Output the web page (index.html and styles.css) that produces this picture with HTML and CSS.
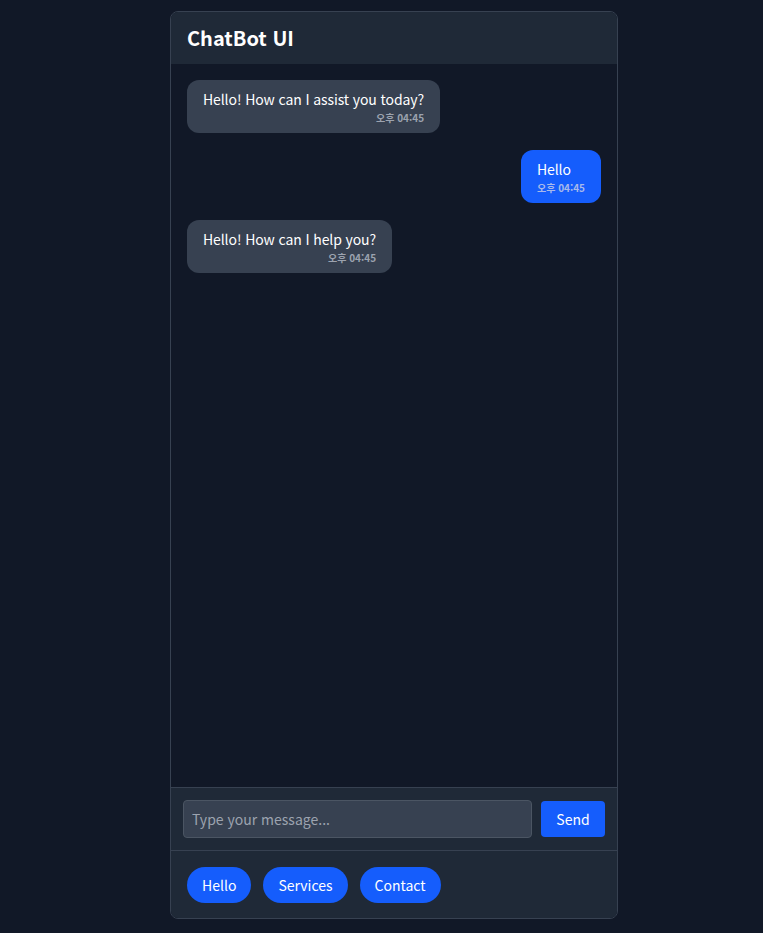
FILE: index.html
```html
<!DOCTYPE html>
<html lang="ko">
<head>
<meta charset="utf-8">
<title>ChatBot UI</title>
<link rel="stylesheet" href="styles.css">
</head>
<body>
<div class="chat">
  <header class="chat-header"><h1>ChatBot UI</h1></header>
  <main class="messages">
    <div class="msg bot">
      <div class="text">Hello! How can I assist you today?</div>
      <div class="time">오후 04:45</div>
    </div>
    <div class="msg user">
      <div class="text">Hello</div>
      <div class="time">오후 04:45</div>
    </div>
    <div class="msg bot">
      <div class="text">Hello! How can I help you?</div>
      <div class="time">오후 04:45</div>
    </div>
  </main>
  <form class="composer">
    <input class="input" type="text" placeholder="Type your message...">
    <button class="send" type="button">Send</button>
  </form>
  <div class="quick">
    <button class="pill" type="button">Hello</button>
    <button class="pill" type="button">Services</button>
    <button class="pill" type="button">Contact</button>
  </div>
</div>
</body>
</html>
```
FILE: styles.css
```css
* { box-sizing: border-box; }
html, body { height: 100%; }
body {
  margin: 0;
  padding: 11px 0 14px 170px;
  background: #111827;
  font-family: "Noto Sans CJK KR", "Noto Sans", sans-serif;
  color: #fff;
}
.chat {
  width: 448px;
  height: 100%;
  border: 1px solid #374151;
  border-radius: 8px;
  overflow: hidden;
  display: flex;
  flex-direction: column;
  background: #111827;
}
.chat-header {
  background: #1f2937;
  height: 52px;
  padding: 0 16px;
  display: flex;
  align-items: center;
}
.chat-header h1 {
  margin: 0;
  font-size: 20px;
  font-weight: 700;
  line-height: 1;
}
.messages {
  flex: 1;
  padding: 16px 16px;
  display: flex;
  flex-direction: column;
  gap: 17px;
}
.msg {
  max-width: 80%;
  padding: 8px 16px 7px;
  border-radius: 12px;
  display: flex;
  flex-direction: column;
}
.msg .text {
  font-size: 14px;
  line-height: 22px;
  letter-spacing: -0.1px;
}
.msg .time {
  font-size: 10px;
  font-weight: 700;
  line-height: 16px;
  text-align: right;
}
.bot {
  align-self: flex-start;
  background: #374151;
}
.bot .time { color: #9ca3af; }
.user {
  align-self: flex-end;
  background: #155dfc;
}
.user .time { color: #a9b9ea; text-align: left; }
.composer {
  margin: 0;
  border-top: 1px solid #374151;
  background: #1f2937;
  padding: 12px;
  display: flex;
  gap: 9px;
  align-items: center;
}
.input {
  flex: 1;
  height: 38px;
  background: #374151;
  border: 1px solid #4b5563;
  border-radius: 4px;
  padding: 0 8px;
  color: #fff;
  font-family: inherit;
  font-size: 14px;
}
.input::placeholder { color: #9ca3af; }
.send {
  height: 36px;
  width: 64px;
  background: #155dfc;
  border: 0;
  border-radius: 4px;
  color: #fff;
  font-family: inherit;
  font-size: 14px;
}
.quick {
  border-top: 1px solid #374151;
  background: #1f2937;
  padding: 16px;
  height: 68px;
  display: flex;
  gap: 12px;
}
.pill {
  height: 36px;
  padding: 0 15px;
  background: #155dfc;
  border: 0;
  border-radius: 18px;
  color: #fff;
  font-family: inherit;
  font-size: 14px;
}
```
